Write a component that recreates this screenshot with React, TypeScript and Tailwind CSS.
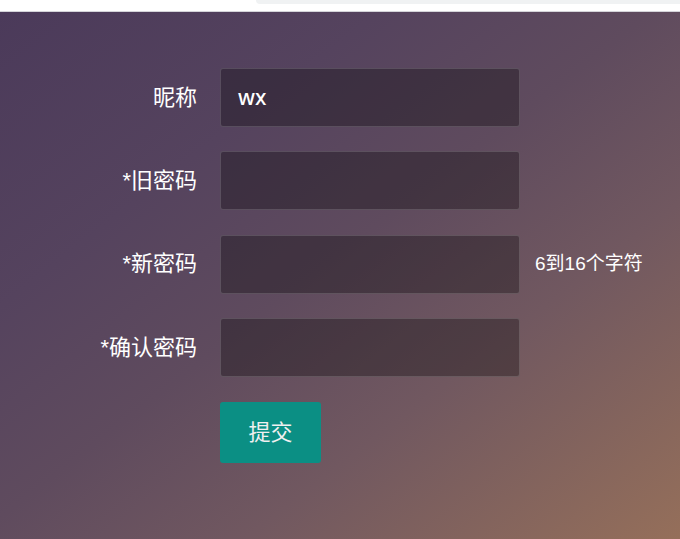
const fields = [
  { label: "昵称", value: "wx" },
  { label: "*旧密码", value: "" },
  { label: "*新密码", value: "", hint: "6到16个字符" },
  { label: "*确认密码", value: "" },
];

export default function App() {
  return (
    <div className="flex min-h-[539px] flex-col font-['Liberation_Sans','Noto_Sans_CJK_SC',sans-serif]">
      {/* strip above the page */}
      <div className="relative h-[11px] bg-white">
        <div className="absolute right-0 top-0 h-[4px] w-[424px] rounded-bl-[10px] bg-[#f0f2f3]" />
      </div>
      <div className="h-[1px] bg-[#d4d4d9]" />

      <div className="flex-1 bg-[linear-gradient(to_bottom_right,#4b3a5a_0%,#55435e_28%,#5f4b5e_48%,#715860_68%,#956f5a_100%)] pt-[56px]">
        <form className="flex flex-col gap-[24.4px]">
          {fields.map((f) => (
            <div key={f.label} className="flex items-center">
              <label className="w-[197px] text-right text-[22px] leading-none text-white">
                {f.label}
              </label>
              <div className="ml-[23px] flex h-[59px] w-[300px] items-center rounded-[3px] border border-white/15 bg-black/30 px-[17px] font-['Noto_Sans',sans-serif] text-[21px] font-medium text-white">
                {f.value}
              </div>
              {f.hint && (
                <span className="ml-[15px] text-[19px] text-white">{f.hint}</span>
              )}
            </div>
          ))}
          <div className="pl-[220px]">
            <button
              type="button"
              className="h-[61px] w-[101px] rounded-[3px] bg-[#0b8f84] text-[22px] text-[#f0f0f0]"
            >
              提交
            </button>
          </div>
        </form>
      </div>
    </div>
  );
}
